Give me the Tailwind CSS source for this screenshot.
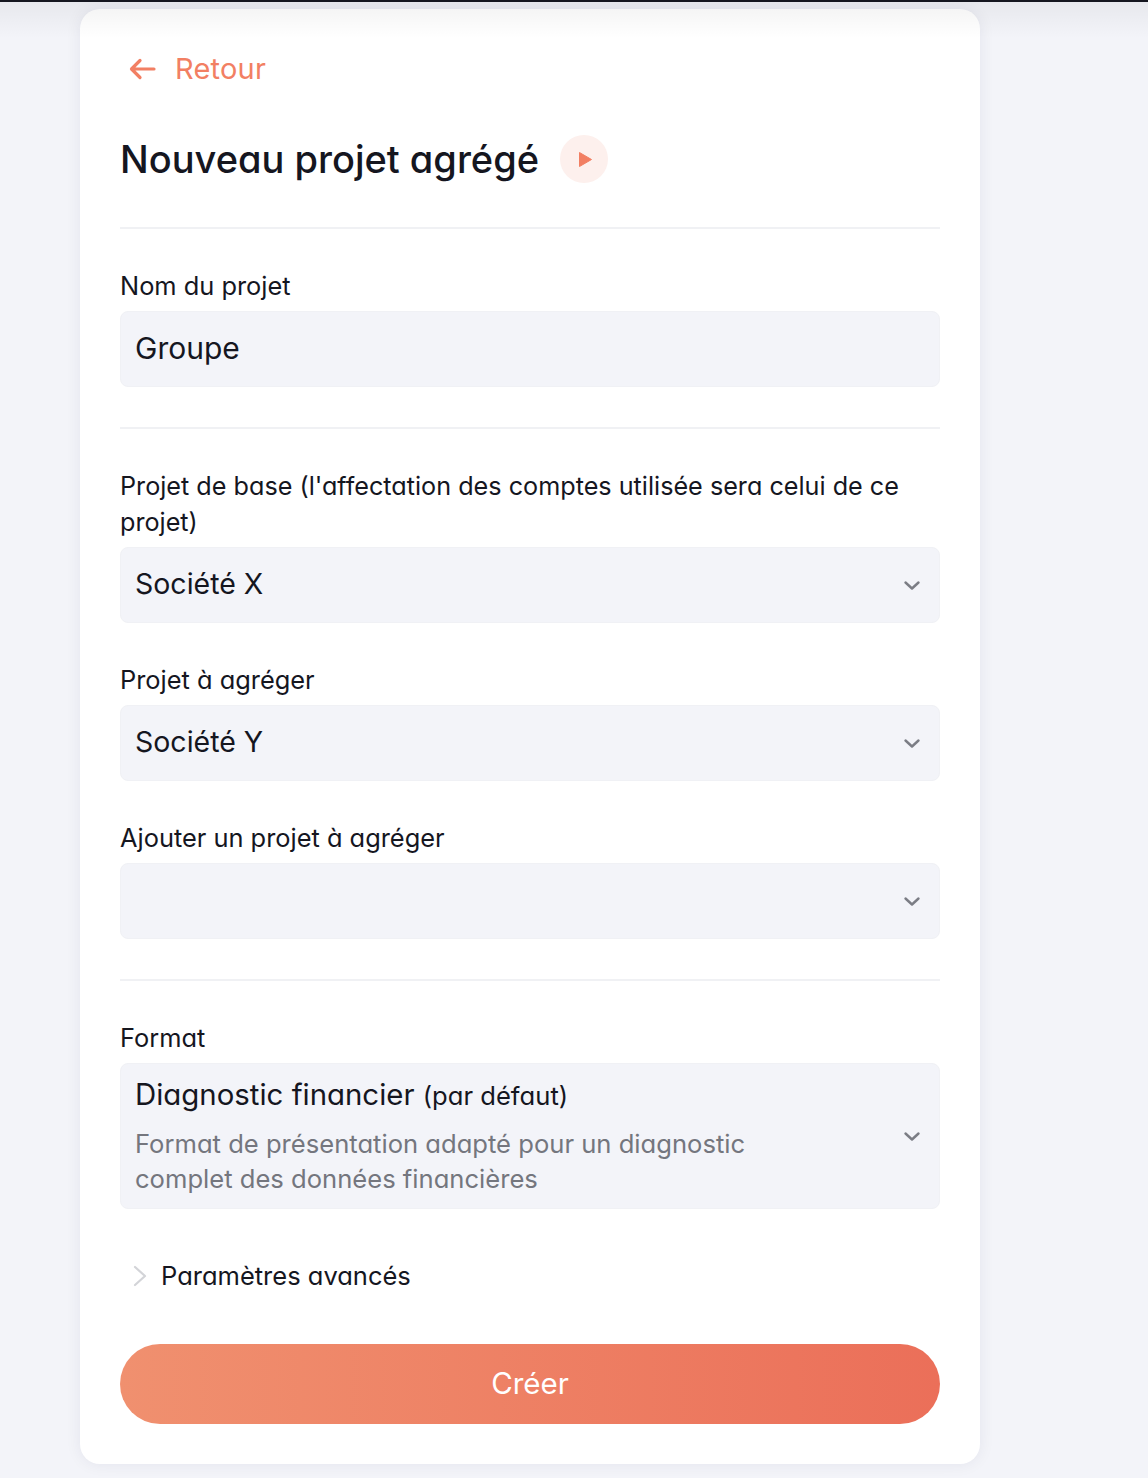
<!DOCTYPE html>
<html lang="fr">
  <head>
    <meta charset="UTF-8" />
    <meta name="viewport" content="width=device-width, initial-scale=1.0" />
    <title>Nouveau projet agrégé</title>
    <script src="https://cdn.jsdelivr.net/npm/@tailwindcss/browser@4"></script>
  </head>
  <body class="relative h-[1478px] overflow-hidden bg-[#f3f4f9] font-['Inter',sans-serif] [font-feature-settings:'cv11'] text-[#15161f]">
    <!-- top bar + its shadow over the page -->
    <div class="absolute inset-x-0 top-0 z-10 h-[2px] bg-[#15161f]"></div>
    <div class="pointer-events-none absolute inset-x-0 top-[2px] z-10 h-[36px] bg-gradient-to-b from-black/5 to-transparent"></div>

    <main class="ml-[80px] mt-[9px] h-[1455px] w-[900px] rounded-[20px] bg-white px-[40px] pt-[38px] shadow-[0_0_16px_rgba(30,35,70,0.07)]">
      <!-- Retour -->
      <a href="#" class="flex h-[44px] items-center pl-[9px] text-[29px] tracking-[0.2px] text-[#f27f63]">
        <svg class="mr-[19px] h-[24px] w-[27px]" viewBox="0 0 27 24" fill="none" stroke="currentColor" stroke-width="3.2" stroke-linecap="round" stroke-linejoin="round">
          <path d="M25 12H3M11 3.500 2.500 12 11 20.500" />
        </svg>
        Retour
      </a>

      <!-- Titre -->
      <div class="mt-[41px] flex h-[54px] items-center">
        <h1 class="text-[38px] font-medium">Nouveau projet agrégé</h1>
        <span class="ml-[21px] flex h-[48px] w-[48px] items-center justify-center rounded-full bg-[#fdf0ed]">
          <svg class="ml-[2px] h-[17px] w-[15px]" viewBox="0 0 15 17" fill="#f27f63"><path d="M1.500 1.500 13.500 8.500 1.500 15.500Z" stroke="#f27f63" stroke-linejoin="round" /></svg>
        </span>
      </div>

      <div class="mt-[41px] h-[2px] bg-[#f0f1f4]"></div>

      <label class="mt-[39px] block h-[36px] text-[25.4px] leading-[36px]">Nom du projet</label>
      <div class="mt-[7px] flex h-[76px] items-center rounded-[8px] border border-[#f0f1f5] bg-[#f3f4f9] pl-[14px] pr-[15px] pb-[2px] text-[30px]">Groupe</div>

      <div class="mt-[40px] h-[2px] bg-[#f0f1f4]"></div>

      <label class="mt-[39px] block h-[72px] text-[25.2px] leading-[36px]">Projet de base (l'affectation des comptes utilisée sera celui de ce projet)</label>
      <div class="mt-[7px] flex h-[76px] items-center justify-between rounded-[8px] border border-[#f0f1f5] bg-[#f3f4f9] pl-[14px] pr-[19px] text-[28.500px]">
        <span class="pb-[1px]">Société X</span>
        <svg class="ml-auto mr-[-1px] h-[18px] w-[18px] text-[#7b7d85]" viewBox="0 0 18 18" fill="none" stroke="currentColor" stroke-width="2.400" stroke-linecap="round" stroke-linejoin="round"><path d="M2.500 6.500 9 12.500 15.500 6.500" /></svg>
      </div>

      <label class="mt-[39px] block h-[36px] text-[25.4px] leading-[36px]">Projet à agréger</label>
      <div class="mt-[7px] flex h-[76px] items-center justify-between rounded-[8px] border border-[#f0f1f5] bg-[#f3f4f9] pl-[14px] pr-[19px] text-[28.500px]">
        <span class="pb-[1px]">Société Y</span>
        <svg class="ml-auto mr-[-1px] h-[18px] w-[18px] text-[#7b7d85]" viewBox="0 0 18 18" fill="none" stroke="currentColor" stroke-width="2.400" stroke-linecap="round" stroke-linejoin="round"><path d="M2.500 6.500 9 12.500 15.500 6.500" /></svg>
      </div>

      <label class="mt-[39px] block h-[36px] text-[25.4px] leading-[36px]">Ajouter un projet à agréger</label>
      <div class="mt-[7px] flex h-[76px] items-center justify-end rounded-[8px] border border-[#f0f1f5] bg-[#f3f4f9] pl-[15px] pr-[19px]">
        <svg class="mr-[-1px] h-[18px] w-[18px] text-[#7b7d85]" viewBox="0 0 18 18" fill="none" stroke="currentColor" stroke-width="2.400" stroke-linecap="round" stroke-linejoin="round"><path d="M2.500 6.500 9 12.500 15.500 6.500" /></svg>
      </div>

      <div class="mt-[40px] h-[2px] bg-[#f0f1f4]"></div>

      <label class="mt-[39px] block h-[36px] text-[25.4px] leading-[36px]">Format</label>
      <div class="mt-[7px] flex h-[146px] items-center justify-between rounded-[8px] border border-[#f0f1f5] bg-[#f3f4f9] pl-[14px] pr-[19px]">
        <div>
          <p class="pt-[1px] text-[29.4px] leading-[36px]">Diagnostic financier <span class="text-[25.6px]">(par défaut)</span></p>
          <p class="mt-[12px] w-[670px] text-[25.6px] leading-[35px] text-[#74767e]">Format de présentation adapté pour un diagnostic complet des données financières</p>
        </div>
        <svg class="mr-[-1px] h-[18px] w-[18px] text-[#7b7d85]" viewBox="0 0 18 18" fill="none" stroke="currentColor" stroke-width="2.400" stroke-linecap="round" stroke-linejoin="round"><path d="M2.500 6.500 9 12.500 15.500 6.500" /></svg>
      </div>

      <!-- Paramètres avancés -->
      <div class="mt-[49px] flex h-[36px] items-center pl-[12px] text-[25.500px]">
        <svg class="mr-[13px] h-[22px] w-[16px] text-[#d3d4d8]" viewBox="0 0 16 22" fill="none" stroke="currentColor" stroke-width="2.200" stroke-linecap="round" stroke-linejoin="round"><path d="M3 2 13 11 3 20" /></svg>
        <span class="pt-[1px]">Paramètres avancés</span>
      </div>

      <button class="mt-[50px] flex h-[80px] w-full items-center justify-center rounded-[40px] bg-gradient-to-r from-[#f0906f] to-[#eb6f59] pb-[2px] text-[29.500px] text-white">Créer</button>
    </main>
  </body>
</html>
